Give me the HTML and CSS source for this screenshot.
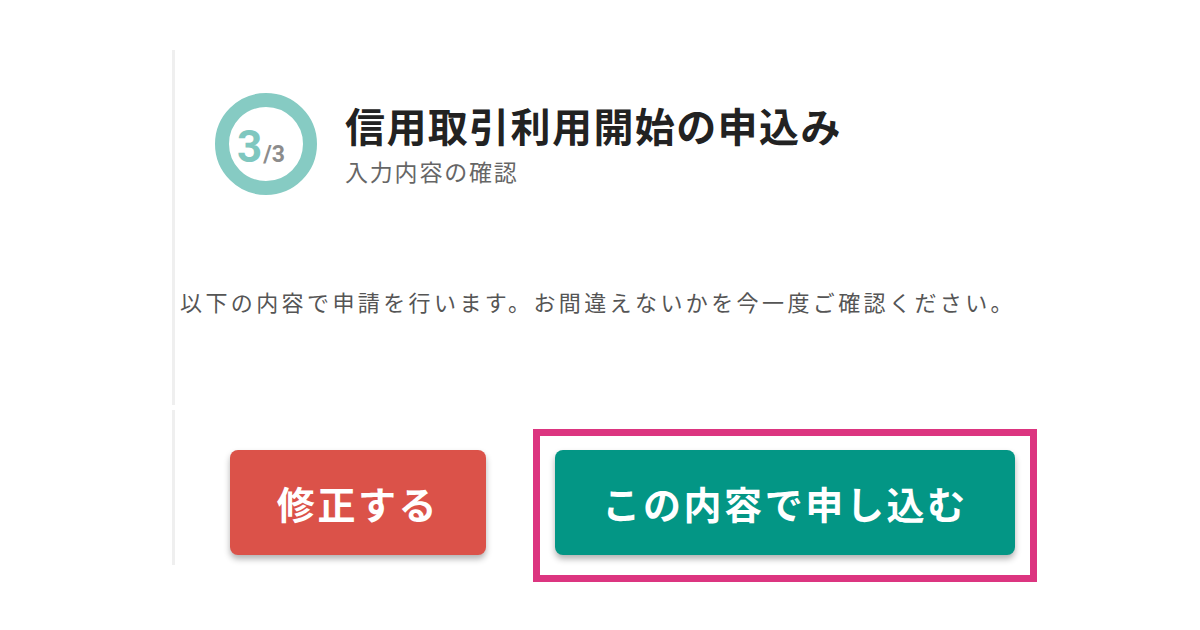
FILE: index.html
```html
<!DOCTYPE html>
<html lang="ja">
<head>
  <meta charset="UTF-8">
  <title>信用取引利用開始の申込み</title>
  <link rel="stylesheet" href="styles.css">
</head>
<body>

  <div class="page">
    <section class="panel panel-top">
      <div class="header">
        <div class="step">
          <span class="step-now">3</span><span class="step-all">/3</span>
        </div>
        <div class="titles">
          <h1 class="title">信用取引利用開始の申込み</h1>
          <p class="subtitle">入力内容の確認</p>
        </div>
      </div>

      <p class="notice">以下の内容で申請を行います。お間違えないかを今一度ご確認ください。</p>
    </section>

    <section class="panel panel-bottom">
      <div class="actions">
        <button class="btn btn-back">修正する</button>
        <div class="submit-wrap">
          <button class="btn btn-submit">この内容で申し込む</button>
          <span class="highlight"></span>
        </div>
      </div>
    </section>
  </div>

</body>
</html>
```

FILE: styles.css
```css
html, body {
  height: 100%;
}

body {
  margin: 0;
  background: #fff;
  font-family: "Noto Sans CJK JP", "Noto Sans", sans-serif;
  color: #333;
}

.page {
  margin-left: 172px;
  padding: 50px 0 65px;
}

.panel {
  border-left: 3px solid #efefef;
  box-sizing: border-box;
}

.panel-top {
  height: 355px;
  padding-top: 43px;
}

.panel-bottom {
  height: 155px;
  margin-top: 5px;
  padding-top: 40px;
}

/* header */
.header {
  display: flex;
  align-items: center;
  padding-left: 40px;
}

.step {
  width: 102px;
  height: 102px;
  box-sizing: border-box;
  border: 14px solid #86cbc3;
  border-radius: 50%;
  display: flex;
  align-items: baseline;
  justify-content: center;
  padding-top: 14px;
  padding-right: 10px;
  font-family: Roboto, "Liberation Sans", sans-serif;
  font-weight: 700;
}

.step-now {
  font-size: 44px;
  color: #7fc7bf;
}

.step-all {
  font-size: 23px;
  color: #8c8c8c;
  margin-left: 1px;
}

.titles {
  margin-left: 28px;
}

.title {
  margin: 0;
  font-size: 40px;
  font-weight: 700;
  letter-spacing: 1.4px;
  line-height: 1.2;
  color: #222;
}

.subtitle {
  margin: 8px 0 0;
  font-size: 23px;
  letter-spacing: 1.8px;
  line-height: 1.3;
  color: #666;
}

.notice {
  margin: 90px 0 0 5px;
  font-size: 22px;
  letter-spacing: 3.4px;
  line-height: 1.5;
  color: #555;
}

/* buttons */
.actions {
  display: flex;
  align-items: flex-start;
  padding-left: 55px;
}

.btn {
  display: block;
  height: 105px;
  border: none;
  border-radius: 8px;
  font-family: "Noto Sans CJK JP", sans-serif;
  font-size: 38px;
  font-weight: 700;
  letter-spacing: 2.6px;
  color: #fff;
  box-shadow: 0 4px 6px rgba(0, 0, 0, 0.3);
  cursor: pointer;
}

.btn-back {
  width: 256px;
  background: #db5249;
}

.btn-submit {
  width: 460px;
  background: #039685;
}

.submit-wrap {
  position: relative;
  margin-left: 69px;
}

.highlight {
  position: absolute;
  left: -22px;
  right: -22px;
  top: -21px;
  bottom: -27px;
  border: 7px solid #dc3580;
  pointer-events: none;
}
```
